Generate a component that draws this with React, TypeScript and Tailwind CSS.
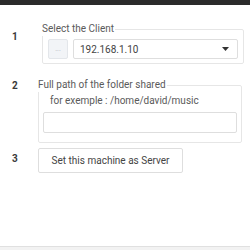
import React from "react";

export default function App() {
  const font = { fontFamily: "Roboto, 'Liberation Sans', sans-serif" };
  return (
    <div className="w-[250px] h-[250px] bg-white overflow-hidden flex flex-col text-[#444]" style={font}>
      <div className="h-[5px] bg-[#2b2b2b] shrink-0" />
      {/* Row 1 */}
      <div className="flex mt-[17px]">
        <div className="w-[42px] pl-[12px] pt-[8px] text-[10px] font-bold text-[#3a3a3a] leading-[14px]">1</div>
        <fieldset className="w-[202px] border border-[#e6e6e6] rounded-[2px] px-[5px] pt-[3px] pb-[4px]">
          <legend className="text-[10px] leading-[14px] text-[#5a5a5a] ml-[-6px] pr-[1px]">Select the Client</legend>
          <div className="flex gap-[5px]">
            <button className="w-[20px] h-[20px] bg-[#f2f4f7] border border-[#e3e6ea] rounded-[2px] flex items-center justify-center text-[7px] text-[#b0b4ba] leading-none">
              ...
            </button>
            <div className="flex-1 h-[20px] border border-[#dedede] rounded-[2px] flex items-center justify-between pl-[6px] pr-[8px]">
              <span className="text-[10px] text-[#444]">192.168.1.10</span>
              <svg width="7" height="4" viewBox="0 0 7 4"><path d="M0 0 L7 0 L3.5 4 Z" fill="#333" /></svg>
            </div>
          </div>
        </fieldset>
      </div>
      {/* Row 2 */}
      <div className="flex mt-[14px]">
        <div className="w-[38px] pl-[12px] text-[10px] font-bold text-[#3a3a3a] leading-[14px] pt-[1px]">2</div>
        <fieldset className="w-[203px] border border-[#e6e6e6] rounded-[2px] px-[4px] pt-[2px] pb-[7px]">
          <legend className="text-[10px] leading-[14px] text-[#5a5a5a] ml-[-5px] pr-[1px]">Full path of the folder shared</legend>
          <div className="text-[10px] leading-[14px] text-[#5a5a5a] pl-[7px]">for exemple : /home/david/music</div>
          <input className="mt-[4px] w-[194px] h-[21px] border border-[#dedede] rounded-[2px] outline-none" />
        </fieldset>
      </div>
      {/* Row 3 */}
      <div className="flex mt-[5px]">
        <div className="w-[38px] pl-[12px] pt-[4px] text-[10px] font-bold text-[#3a3a3a] leading-[14px]">3</div>
        <button className="w-[145px] h-[25px] border border-[#dedede] rounded-[2px] bg-white text-[10px] text-[#444]">
          Set this machine as Server
        </button>
      </div>
      <div className="flex-1" />
      <div className="h-[4px] border-t border-[#e0e0e0] bg-[#f2f2f2] shrink-0" />
    </div>
  );
}
